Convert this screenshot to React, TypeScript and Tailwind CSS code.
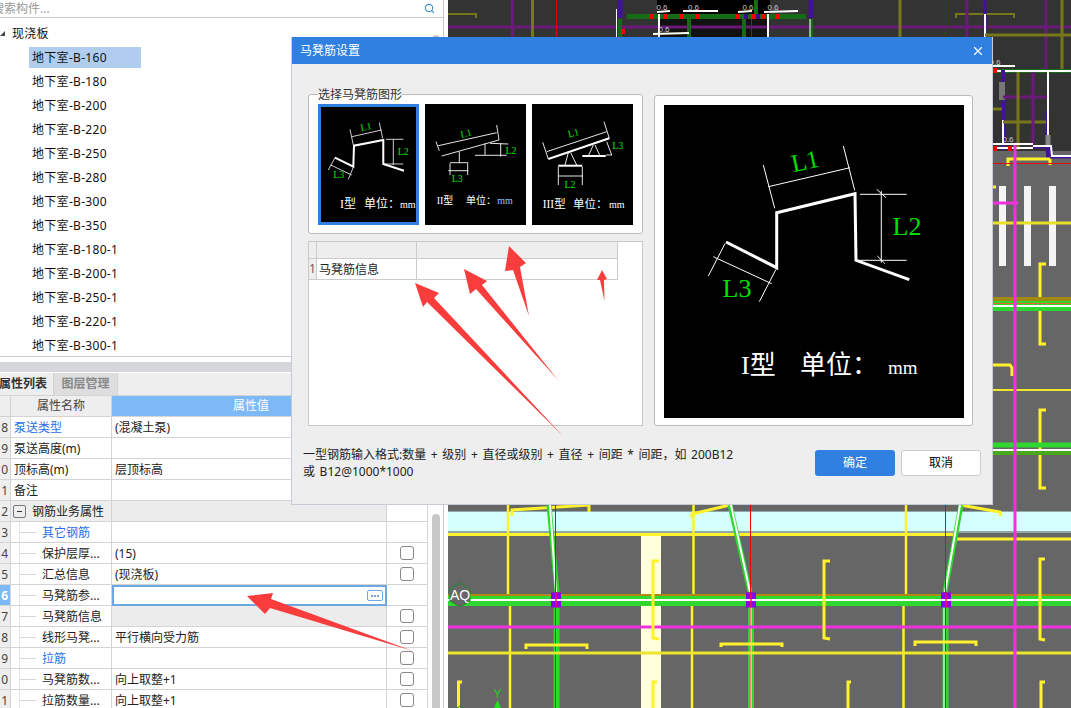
import { Search, X } from "lucide-react";

const treeItems = [
  "地下室-B-160", "地下室-B-180", "地下室-B-200", "地下室-B-220", "地下室-B-250",
  "地下室-B-280", "地下室-B-300", "地下室-B-350", "地下室-B-180-1", "地下室-B-200-1",
  "地下室-B-250-1", "地下室-B-220-1", "地下室-B-300-1",
];

type Row = {
  no: number;
  name: string;
  value?: string;
  blue?: boolean;
  indent?: boolean;
  check?: boolean;
  group?: boolean;
  editing?: boolean;
  grayValue?: boolean;
};

// the number column is so narrow that only the last digit shows
const rows: Row[] = [
  { no: 8, name: "泵送类型", value: "(混凝土泵)", blue: true },
  { no: 9, name: "泵送高度(m)" },
  { no: 0, name: "顶标高(m)", value: "层顶标高" },
  { no: 1, name: "备注" },
  { no: 2, name: "钢筋业务属性", group: true },
  { no: 3, name: "其它钢筋", blue: true, indent: true },
  { no: 4, name: "保护层厚...", value: "(15)", indent: true, check: true },
  { no: 5, name: "汇总信息", value: "(现浇板)", indent: true, check: true },
  { no: 6, name: "马凳筋参...", indent: true, editing: true },
  { no: 7, name: "马凳筋信息", indent: true, check: true, grayValue: true },
  { no: 8, name: "线形马凳...", value: "平行横向受力筋", indent: true, check: true },
  { no: 9, name: "拉筋", blue: true, indent: true, check: true },
  { no: 0, name: "马凳筋数...", value: "向上取整+1", indent: true, check: true },
  { no: 1, name: "拉筋数量...", value: "向上取整+1", indent: true, check: true },
];

const DARK_P = "#6a1b7a";
const OLIVE = "#77771a";
const DARK_G = "#176b17";
const YEL = "#fff22a";
const GRN = "#2ed82e";
const MAG = "#f030e0";

// page coordinates, viewBox of the canvas starts at x=448
const cadLines: [string, string, number][] = [
  // dark upper part
  ["448,27 1071,27", DARK_P, 3],
  ["448,14 476,14 476,18", OLIVE, 2],
  ["956,18 956,14 1014,14 1014,18", OLIVE, 2],
  ["512.5,0 512.5,37", DARK_P, 3],
  ["532.5,0 532.5,37", OLIVE, 3],
  ["556.5,0 556.5,37", "#e00000", 1],
  ["620,0 620,18", "#43129a", 5],
  ["620,19 620,37", DARK_G, 4],
  ["616.5,9 616.5,37", "#ffffff", 1],
  ["627,16.5 806,16.5", DARK_G, 5],
  ["689,19 689,37", DARK_G, 4],
  ["744,19 744,37", DARK_G, 4],
  ["756,0 756,14", DARK_G, 4],
  ["659,14 659,37", "#ffffff", 2],
  ["768,14 768,37", "#ffffff", 2],
  ["751.5,19 751.5,37", "#c00000", 1],
  ["683,11 718,11", "#ffffff", 2],
  ["657,12 670,11", "#ffffff", 2],
  ["738,12 752,11", "#ffffff", 2],
  ["764,12 798,11", "#ffffff", 2],
  ["653,34 689,33", "#ffffff", 2],
  ["811,0 811,18", "#43129a", 5],
  ["811,19 811,37", DARK_G, 4],
  ["810,19 810,37", "#ffffff", 1],
  ["900,0 900,37", OLIVE, 3],
  ["945.5,0 945.5,37", "#b00000", 1],
  ["967,0 967,37", DARK_P, 3],
  ["985,0 985,37", "#43129a", 3],
  ["985,14 985,37", "#ffffff", 2],
  ["1046,0 1046,72", DARK_P, 3],
  ["1062,0 1062,72", OLIVE, 3],
  ["985,35 1071,35", OLIVE, 3],
  // right strip, dark part
  ["993,66 1015,66", "#ffffff", 2],
  ["995,71 1071,71", DARK_G, 4],
  ["995,71 1071,71", "#ffffff", 2],
  ["1003,70 1003,150", "#43129a", 4],
  ["1003,120 1003,145", "#ffffff", 2],
  ["1002,82 1002,100", "#777777", 6],
  ["1003,97 1047,97", DARK_P, 3],
  ["1003,122 1047,122", OLIVE, 3],
  ["993,109 1002,109", OLIVE, 3],
  ["1018,72 1018,150", OLIVE, 3],
  ["1033,72 1033,148", DARK_P, 3],
  ["1048,110 1048,160", "#43129a", 4],
  ["1048,72 1048,145", "#ffffff", 2],
  ["1048,135 1048,145", "#888888", 5],
  // gray part, right strip
  ["993,144 1033,144", "#ffffff", 2],
  ["995,148 1033,148", "#ffffff", 2],
  ["1033,147 1050,147 1052,157 1071,157", "#43129a", 3],
  ["1033,146 1051,146 1052,156 1071,156", "#ffffff", 2],
  ["1008,166 1008,159 1050,159", YEL, 3],
  ["1050,159 1050,165", YEL, 3],
  ["993,163.5 1071,163.5", "#e01010", 1],
  ["993,187 996,187", YEL, 3],
  ["993,203 1018,203", MAG, 3],
  ["993,223 1071,223", "#e8e02a", 3],
  ["1046,264 1040,264 1040,344 1046,344", YEL, 3],
  ["1046,410 1040,410 1040,488 1046,488", YEL, 3],
  ["993,299 1071,299", "#a08a10", 4],
  ["993,306 1071,306", GRN, 10],
  ["993,303.5 1071,303.5", "#f06030", 1],
  ["993,306 1071,306", "#ffffff", 2],
  ["993,365 1010,365 1012,368 1012,376", YEL, 3],
  ["993,390 1071,390", "#ece62a", 2],
  ["993,445 1071,445", GRN, 5],
  ["993,450 1071,450", "#ffffff", 2],
  ["993,453 1071,453", "#4aa81c", 4],
  // lower part
  ["448,534.5 955,534.5 955,539 1071,539", YEL, 3],
  ["508,505 508,598", YEL, 2.5],
  ["510,600 510,708", YEL, 2.5],
  ["693.5,505 693.5,599", YEL, 2.5],
  ["692,600 692,708", YEL, 2.5],
  ["906,505 906,599", YEL, 2.5],
  ["903.5,600 903.5,708", YEL, 2.5],
  ["512,516 512,510 589,505 589,512", YEL, 3],
  ["692,518 692,514 730,505", YEL, 3],
  ["960,505 1000,512 1001,516", YEL, 3],
  ["549,505 557,592", GRN, 5],
  ["730,505 750,592", GRN, 5],
  ["961,505 945,592", GRN, 5],
  ["550,505 556,592", "#ffffff", 2],
  ["731,505 750,592", "#ffffff", 2],
  ["960,505 945,592", "#ffffff", 2],
  ["448,600 1071,600", GRN, 12],
  ["448,595 1071,595", "#b08a10", 2],
  ["448,600 1071,600", "#ffffff", 2],
  ["556.5,607 556.5,708", GRN, 6],
  ["751,607 751,708", GRN, 6],
  ["945.5,607 945.5,708", GRN, 6],
  ["555.5,505 555.5,708", "#f00000", 1],
  ["750.5,505 750.5,708", "#f00000", 1],
  ["945.5,505 945.5,708", "#f00000", 1],
  ["751,607 751,708", "#ffffff", 1],
  ["944,607 944,708", "#ffffff", 1],
  ["448,627 1071,627", MAG, 3],
  ["448,653 1071,653", "#ece62a", 3],
  ["1015,145 1015,708", MAG, 3],
  ["659,561 653,561 653,638 659,639", YEL, 3],
  ["830,561 824,561 824,638 830,639", YEL, 3],
  ["1045,559 1040,559 1040,639 1045,640", YEL, 3],
  ["526,649 526,645 587,645 587,649", YEL, 3],
  ["721,647 721,644 782,644 782,647", YEL, 3],
  ["915,646 915,642 976,642 976,646", YEL, 3],
  ["462,682 458.5,682 458.5,708", YEL, 3],
  ["657,682 653,682 653,708", YEL, 3],
  ["851,682 848,682 848,708", YEL, 3],
  ["1045,682 1041,682 1041,708", YEL, 3],
];

const redSquares = [
  [649, 14], [664, 14], [680, 14], [696, 14], [736, 14], [751, 14], [761, 14], [776, 14], [621, 29],
  [993, 68], [993, 146], [1008, 146],
];

const CadLabel = ({ x, y }: { x: number; y: number }) => (
  <text x={x} y={y} fill="#cccccc" fontSize={8} textAnchor="middle">
    0.6
  </text>
);

const Canvas = () => (
  <svg viewBox="448 0 623 708" className="block h-[708px] w-[623px] shrink-0 font-['Liberation_Sans',sans-serif]">
    <rect x="448" y="0" width="623" height="151" fill="#333333" />
    <rect x="448" y="151" width="623" height="557" fill="#666666" />
    <rect x="657" y="0" width="113" height="14" fill="#000000" />
    <rect x="659" y="19" width="109" height="18" fill="#111111" />
    <rect x="448" y="512" width="623" height="20" fill="#d5fefe" />
    <rect x="448" y="511" width="623" height="1" fill="#8fa8a8" />
    <rect x="448" y="531" width="623" height="2" fill="#8fa8a8" />
    <rect x="641" y="533" width="20" height="175" fill="#ffffdc" />
    <rect x="999" y="186" width="7" height="80" fill="#f4f4f4" />
    <rect x="1024" y="186" width="7" height="80" fill="#f4f4f4" />
    <rect x="1049" y="186" width="7" height="80" fill="#f4f4f4" />
    {cadLines.map(([points, color, w], i) => (
      <polyline key={i} points={points} fill="none" stroke={color} strokeWidth={w} />
    ))}
    {redSquares.map(([x, y]) => (
      <rect key={`${x}-${y}`} x={x} y={y} width={4} height={5} fill="#ff0000" />
    ))}
    <rect x="744" y="14" width="4" height="5" fill="#3a0a9a" />
    <rect x="756" y="14" width="4" height="5" fill="#3a0a9a" />
    {[551, 746, 941].map((x) => (
      <g key={x}>
        <rect x={x} y={592.5} width={10} height={15} fill="#8a00ee" />
        <rect x={x} y={599} width={10} height={2} fill="#ffffff" />
        <rect x={x + 4} y={592.5} width={2} height={15} fill="#ff0040" opacity={0.7} />
      </g>
    ))}
    <CadLabel x={662} y={10} />
    <CadLabel x={693.5} y={10} />
    <CadLabel x={748} y={10} />
    <CadLabel x={773} y={10} />
    <CadLabel x={664} y={32} />
    <CadLabel x={995} y={65} />
    <CadLabel x={1008} y={142} />
    <polygon points="460,583 470,589 470,601 460,607 450,601 450,589" fill="#666666" stroke="#1d8a2a" strokeWidth={1} />
    <text x="460" y="600" fill="#ffffff" fontSize={14} textAnchor="middle">
      AQ
    </text>
    <polygon points="460,706 470,712 450,712" fill="none" stroke="#1d8a2a" strokeWidth={1} />
    <text x="497.5" y="698" fill="#20d020" fontSize={12} textAnchor="middle">
      Y
    </text>
    <polygon points="497.5,700 501,708 494,708" fill="#20e020" />
  </svg>
);

// caption inside the black pictures, one element per word as the spacing is wider than a space
const Caption = ({ parts, y, size, unitSize, color }: {
  parts: [string, number][];
  y: number;
  size: number;
  unitSize: number;
  color?: string;
}) => (
  <g className="font-['Liberation_Serif','Noto_Sans_CJK_SC',serif]">
    <text x={parts[0][1]} y={y} fontSize={size} fill="#ffffff">{parts[0][0]}</text>
    <text x={parts[1][1]} y={y} fontSize={size} fill="#ffffff">{parts[1][0]}</text>
    <text x={parts[2][1]} y={y} fontSize={unitSize} fill={color ?? "#ffffff"}>{parts[2][0]}</text>
  </g>
);

const Dim = ({ x, y, t, size = 10, rotate = 0 }: { x: number; y: number; t: string; size?: number; rotate?: number }) => (
  <text
    x={x}
    y={y}
    fontSize={size}
    fill="#00e000"
    textAnchor="middle"
    dominantBaseline="central"
    transform={rotate ? `rotate(${rotate} ${x} ${y})` : undefined}
    className="font-['Liberation_Serif',serif]"
  >
    {t}
  </text>
);

const Lines = ({ w, items }: { w: number; items: string[] }) => (
  <>
    {items.map((p) => (
      <polyline key={p} points={p} fill="none" stroke="#ffffff" strokeWidth={w} />
    ))}
  </>
);

const TileOne = () => (
  <svg viewBox="0 0 101 121" className="block h-full w-full">
    <Lines w={2} items={["17,53.7 35.3,62.7 36,41.7 65.3,36 65.3,60 86,66.7"]} />
    <Lines
      w={0.8}
      items={[
        "32,25.3 35.3,41", "61.3,18.7 64.7,34.3", "33.7,32.7 63.7,26",
        "68,35.3 85.3,35.3", "67,60 85.3,60", "75.3,35.3 75.3,61",
        "17,53.7 10.3,66", "35.3,63.3 30.3,75.3", "12.7,61 33.7,71",
      ]}
    />
    <Dim x={48} y={22.7} t="L1" rotate={-12} />
    <Dim x={85.3} y={47.3} t="L2" />
    <Dim x={20.7} y={70.3} t="L3" />
    <Caption parts={[["I型", 22], ["单位：", 46], ["mm", 82]]} y={104} size={12} unitSize={10} />
  </svg>
);

const TileTwo = () => (
  <svg viewBox="0 0 101 121" className="block h-full w-full">
    <Lines
      w={0.9}
      items={[
        "13.3,41.7 71.7,28.7", "16.7,52 74,36", "11,37.7 14.3,46.7", "71.7,21 74,36",
        "34.3,47.7 34.3,58.7", "25,58.7 43.3,58.7", "25,59.3 25,71", "42.7,59.3 42.7,71", "23.3,66.7 43.3,66.7",
        "60,39.3 60,51", "50,51.3 70,51.3", "65,39.3 83.3,40", "70,51.3 81.7,51.3", "75.7,39.3 75.7,52.7",
      ]}
    />
    <Dim x={41} y={29.3} t="L1" rotate={-12} />
    <Dim x={86} y={46.7} t="L2" />
    <Dim x={32.3} y={74.3} t="L3" />
    <Caption parts={[["II型", 11.7], ["单位：", 41], ["mm", 72.3]]} y={100} size={10} unitSize={10} color="#8ec8ff" />
  </svg>
);

const TileThree = () => (
  <svg viewBox="0 0 101 121" className="block h-full w-full">
    <Lines w={2} items={["16.3,55 77.3,34.3", "26.3,61.7 50.3,61.7", "50.3,52 73.7,52"]} />
    <Lines
      w={0.9}
      items={[
        "14.7,47.7 74.7,27.7", "10.7,38.3 16.3,55", "72,17.7 77.3,34.3",
        "36.3,48.7 33,61", "38.7,48.7 44.7,61", "26.3,62.7 26.3,81", "50.3,62.7 50.3,81", "26.3,72 51,72",
        "61.3,41 56.3,52", "63,41 68,52", "74.7,37.7 79.7,51", "74,51 80,51",
      ]}
    />
    <Dim x={41.3} y={28.7} t="L1" rotate={-14} />
    <Dim x={38} y={80.3} t="L2" />
    <Dim x={85.7} y={41.7} t="L3" />
    <Caption parts={[["III型", 10.7], ["单位：", 41], ["mm", 77]]} y={104} size={11.5} unitSize={10} />
  </svg>
);

const Preview = () => (
  <svg viewBox="0 0 300 313" className="block h-[313px] w-[300px] bg-black">
    <Lines w={3} items={["62,137 112.7,162.7 112.7,107.7 191,88.7 192,155.3 245.3,174.7"]} />
    <Lines
      w={1}
      items={[
        "99.3,60 110.7,103.3", "179.3,41 190.7,85.3", "104.3,81.7 186,62.7",
        "196,89.3 242.7,89.3", "192.7,155.3 242.7,155.3", "217.3,86 217.3,157.7",
        "212.7,84.3 222,92.7", "213.3,151 221,158.7",
        "61,138.7 44.3,171", "112,164.3 95.3,196.7", "49.3,151.7 107.7,178.7",
      ]}
    />
    <Dim x={141} y={56} t="L1" size={25} rotate={-12} />
    <Dim x={243} y={121} t="L2" size={26} />
    <Dim x={73} y={183} t="L3" size={26} />
    <Caption parts={[["I型", 77], ["单位：", 136], ["mm", 224]]} y={269} size={26} unitSize={19} />
  </svg>
);

const tiles = [
  { id: 1, el: <TileOne />, selected: true },
  { id: 2, el: <TileTwo /> },
  { id: 3, el: <TileThree /> },
];

const Dialog = () => (
  <div className="absolute left-[291px] top-[37px] flex h-[468px] w-[702px] flex-col border border-t-0 border-[#c6ccd6] bg-[#eeeeee]">
    <div className="flex h-[27px] shrink-0 items-center justify-between bg-[#2f80e0] pl-[8px] pr-[7px] text-[12px] text-white">
      <span>马凳筋设置</span>
      <X size={14} strokeWidth={2} />
    </div>
    <div className="ml-[16px] mt-[30px] flex items-start gap-[11px]">
      <div className="flex w-[335px] flex-col gap-[7px]">
        <div className="relative h-[140px] rounded-[3px] border border-[#bbbbbb] bg-white pl-[9px] pt-[9px]">
          <span className="absolute -top-[9px] left-[9px] bg-gradient-to-b from-[#eeeeee] from-50% to-white to-50% text-[12px] leading-[17px] text-[#333333]">
            选择马凳筋图形
          </span>
          <div className="flex gap-[6px]">
            {tiles.map((t) => (
              <div
                key={t.id}
                className={
                  t.selected
                    ? "h-[121px] w-[101px] bg-black outline-3 -outline-offset-3 outline-[#2f80e0]"
                    : "h-[121px] w-[101px] bg-black"
                }
              >
                {t.el}
              </div>
            ))}
          </div>
        </div>
        <div className="h-[185px] border border-[#c8c8c8] bg-white text-[12px] text-[#222222]">
          <div className="flex h-[17px] w-[309px] border-b border-r border-[#cccccc] bg-[#eeeeee]">
            <div className="w-[8px] border-r border-[#cccccc]" />
            <div className="w-[100px] border-r border-[#cccccc]" />
          </div>
          <div className="flex h-[21px] w-[309px] items-center border-b border-r border-[#cccccc]">
            <div className="flex h-full w-[8px] items-center justify-center border-r border-[#cccccc] bg-[#eeeeee] text-[#666666]">1</div>
            <div className="flex h-full w-[100px] items-center border-r border-[#cccccc] pl-[2px] pt-px">马凳筋信息</div>
          </div>
        </div>
      </div>
      <div className="mt-px h-[331px] w-[319px] rounded-[3px] border border-[#bbbbbb] bg-white p-[9px]">
        <Preview />
      </div>
    </div>
    <div className="ml-[11px] mr-[11px] mt-[20px] flex items-start justify-between">
      <p className="w-[440px] text-[12px] leading-[17px] text-[#222222] [word-spacing:1.5px]">
        一型钢筋输入格式:数量 + 级别 + 直径或级别 + 直径 + 间距 * 间距，如 200B12
        <br />
        或 B12@1000*1000
      </p>
      <div className="mt-[4px] flex gap-[6px] text-[12px]">
        <button className="h-[26px] w-[80px] rounded-[3px] bg-[#2f80e0] text-white">确定</button>
        <button className="h-[26px] w-[80px] rounded-[3px] border border-[#cccccc] bg-white text-black">取消</button>
      </div>
    </div>
  </div>
);

// annotation arrows drawn on the screenshot
const arrows = [
  "247,596 273,593 271,599 413,651 270,608 265,614",
  "415,283 439,293 434,298 563,436 427,302 423,307",
  "464,269 487,281 482,285 558,380 476,289 470,294",
  "509,246 526,263 520,267 529,316 513,270 505,271",
  "602,270 607,279 604,280 604.5,301 600,280 597,280",
];

const Arrows = () => (
  <svg viewBox="0 0 1071 708" className="pointer-events-none absolute inset-0 h-[708px] w-[1071px]">
    {arrows.map((p) => (
      <polygon key={p} points={p} fill="#f93c3c" />
    ))}
  </svg>
);

const PropRow = ({ row }: { row: Row }) => (
  <div className="flex h-[21px] border-b border-[#d4d4d4]">
    <div
      className={
        row.editing
          ? "flex w-[11px] shrink-0 items-center justify-end border-r border-[#d4d4d4] bg-[#7db8f7] pr-[2px] pt-px font-bold text-white"
          : "flex w-[11px] shrink-0 items-center justify-end border-r border-[#d4d4d4] bg-[#eeeeee] pr-[2px] pt-px text-[#444444]"
      }
    >
      {row.no}
    </div>
    <div className={`flex w-[101px] shrink-0 items-center border-r border-[#d4d4d4] ${row.group ? "bg-[#eeeeee]" : ""}`}>
      {row.indent && (
        <>
          <div className="ml-[8px] h-full border-l border-[#e4e4e4]" />
          <div className="mr-[6px] w-[16px] border-t border-[#d8d8d8]" />
        </>
      )}
      {row.group && (
        <div className="ml-[2px] mr-[6px] flex h-[13px] w-[13px] items-center justify-center rounded-[2px] border border-[#777777]">
          <div className="h-px w-[5px] bg-[#333333]" />
        </div>
      )}
      <span className={`${row.indent || row.group ? "" : "pl-[3px]"} whitespace-nowrap pt-px ${row.blue ? "text-[#2a6fe8]" : "text-[#222222]"}`}>
        {row.name}
      </span>
    </div>
    {row.editing ? (
      <div className="flex h-[21px] w-[275px] shrink-0 items-center justify-end border-2 border-[#6fa8e0] bg-white pr-[2px]">
        <div className="flex h-[11px] w-[16px] items-center justify-center gap-px rounded-[2px] border border-[#6fa8e0]">
          <span className="h-[2px] w-[2px] bg-[#6fa8e0]" />
          <span className="h-[2px] w-[2px] bg-[#6fa8e0]" />
          <span className="h-[2px] w-[2px] bg-[#6fa8e0]" />
        </div>
      </div>
    ) : (
      <div
        className={`flex w-[275px] shrink-0 items-center border-r border-[#d4d4d4] pl-[3px] pt-px text-[#222222] ${
          row.group || row.grayValue ? "bg-[#ececec]" : ""
        }`}
      >
        {row.value}
      </div>
    )}
    <div className="flex w-[41px] shrink-0 items-center justify-center border-r border-[#d4d4d4]">
      {row.check && <div className="h-[14px] w-[14px] rounded-[3px] border border-[#888888] bg-white" />}
    </div>
  </div>
);

const LeftPanel = () => (
  <div className="h-[708px] w-[448px] shrink-0 overflow-hidden bg-white pr-[4px] text-[12px]">
    <div className="flex h-[708px] flex-col border-r border-[#c8c8c8]">
      <div className="flex h-[18px] shrink-0 items-center justify-between border-b border-[#cccccc] pr-[8px]">
        <span className="-ml-[8px] leading-[17px] text-[#999999]">搜索构件...</span>
        <Search size={11} strokeWidth={2.4} className="text-[#3d8ec9]" />
      </div>
      <div className="flex h-[339px] shrink-0 justify-between overflow-hidden border-b border-[#cccccc]">
        <div className="pt-[3px] tracking-[0.3px] text-[#111111]">
          <div className="flex h-[24px] items-center">
            <svg width="6" height="6" viewBox="0 0 6 6" className="mr-[6px]">
              <polygon points="0,6 5,6 5,1" fill="#444444" />
            </svg>
            <span className="pt-px">现浇板</span>
          </div>
          {treeItems.map((t, i) => (
            <div key={t} className="flex h-[24px] items-center pl-[29px]">
              <div className={`flex h-[21px] w-[112px] items-center pl-[3px] pt-px ${i === 0 ? "bg-[#b0cdef]" : ""}`}>{t}</div>
            </div>
          ))}
        </div>
        <div className="mr-[3px] mt-[17px] h-full w-[8px] rounded-t-full bg-[#c8c8c8]" />
      </div>
      <div className="mt-[5px] h-[10px] shrink-0 bg-[#d4d6da]" />
      <div className="mt-px flex h-[23px] shrink-0 border-b border-[#d4d4d4] bg-[#eeeeee] font-bold">
        <div className="-ml-[7px] flex w-[61px] items-center justify-center border-r border-[#d4d4d4] text-[#333333]">属性列表</div>
        <div className="flex w-[64px] items-center justify-center border-r border-[#d4d4d4] bg-[#dedede] text-[#888888]">图层管理</div>
      </div>
      <div className="flex">
        <div className="w-[428px] shrink-0">
          <div className="flex h-[21px] border-b border-[#d4d4d4]">
            <div className="w-[11px] border-r border-[#d4d4d4] bg-[#eeeeee]" />
            <div className="flex w-[101px] items-center justify-center border-r border-[#d4d4d4] bg-[#eeeeee] text-[#444444]">属性名称</div>
            <div className="flex w-[316px] items-center justify-center bg-[#7db8f7] pr-[38px] text-white">属性值</div>
          </div>
          {rows.map((r, i) => (
            <PropRow key={i} row={r} />
          ))}
        </div>
        <div className="ml-[4px] mt-[118px] h-[300px] w-[8px] rounded-t-full bg-[#c8c8c8]" />
      </div>
    </div>
  </div>
);

export default function App() {
  return (
    <div className="relative flex h-[708px] w-[1071px] overflow-hidden font-['Noto_Sans','Noto_Sans_CJK_SC',sans-serif]">
      <LeftPanel />
      <Canvas />
      <Dialog />
      <Arrows />
    </div>
  );
}
